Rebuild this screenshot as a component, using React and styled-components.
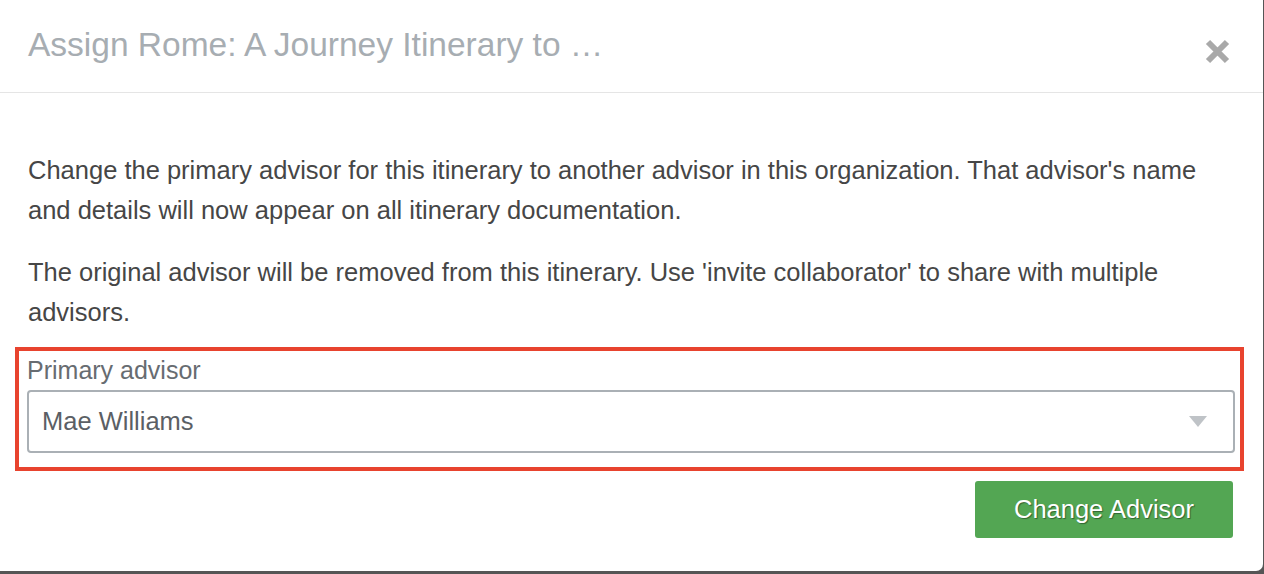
import React from "react";
import styled, { createGlobalStyle } from "styled-components";

const Global = createGlobalStyle`
  html, body { margin: 0; padding: 0; }
  body {
    background: #555555;
    font-family: "Liberation Sans", Arial, Helvetica, sans-serif;
    overflow: hidden;
  }
`;

const Page = styled.div`
  width: 1264px;
  height: 574px;
  display: flex;
  align-items: flex-start;
`;

const Modal = styled.div`
  width: 1263px;
  height: 571px;
  background: #fff;
  border-radius: 0 0 7px 0;
  display: flex;
  flex-direction: column;
`;

const Header = styled.div`
  height: 93px;
  box-sizing: border-box;
  border-bottom: 1px solid #e5e5e5;
  display: flex;
  align-items: center;
  justify-content: space-between;
  padding: 0 32px 0 28px;
`;

const Title = styled.h4`
  margin: 0 0 2px 0;
  font-size: 33.5px;
  font-weight: 400;
  color: #a7adb2;
`;

const Close = styled.button`
  border: 0;
  background: none;
  padding: 0;
  width: 28px;
  height: 28px;
  display: flex;
  align-items: center;
  justify-content: center;
  cursor: pointer;
  margin-top: 10px;
`;

const Body = styled.div`
  padding: 57px 30px 0 28px;
  display: flex;
  flex-direction: column;
`;

const Para = styled.p`
  margin: 0 0 22px 0;
  font-size: 25.5px;
  line-height: 40px;
  color: #464646;
  &:last-of-type { margin-bottom: 15px; }
`;

const Highlight = styled.div`
  margin: 0 -11px 0 -13px;
  border: 4px solid #e8432e;
  padding: 1px 5px 14px 8px;
  display: flex;
  flex-direction: column;
  gap: 2px;
`;

const Label = styled.label`
  font-size: 25px;
  color: #676c71;
  line-height: 36px;
`;

const SelectBox = styled.div`
  height: 63px;
  box-sizing: border-box;
  border: 2px solid #aab0b5;
  border-radius: 4px;
  display: flex;
  align-items: center;
  justify-content: space-between;
  padding: 0 26px 0 13px;
  font-size: 25.5px;
  color: #5b5f65;
`;

const Caret = styled.span`
  width: 0;
  height: 0;
  border-left: 9px solid transparent;
  border-right: 9px solid transparent;
  border-top: 11px solid #bfc3c7;
`;

const Footer = styled.div`
  display: flex;
  justify-content: flex-end;
  padding-top: 10px;
`;

const Button = styled.button`
  width: 258px;
  height: 57px;
  border: 0;
  border-radius: 3px;
  background: #53a653;
  color: #fff;
  font-family: inherit;
  font-size: 25.5px;
  text-shadow: 1px 1px 1px rgba(0, 0, 0, 0.4);
  cursor: pointer;
`;

export default function App() {
  return (
    <Page>
      <Global />
      <Modal>
        <Header>
          <Title>Assign Rome: A Journey Itinerary to …</Title>
          <Close aria-label="Close">
            <svg width="27" height="27" viewBox="0 0 27 27">
              <path d="M4 4 L23 23 M23 4 L4 23" stroke="#a9a9a9" strokeWidth="6" strokeLinecap="butt" />
            </svg>
          </Close>
        </Header>
        <Body>
          <Para>
            Change the primary advisor for this itinerary to another advisor in this organization. That advisor's name and details will now appear on all itinerary documentation.
          </Para>
          <Para>
            The original advisor will be removed from this itinerary. Use 'invite collaborator' to share with multiple advisors.
          </Para>
          <Highlight>
            <Label>Primary advisor</Label>
            <SelectBox>
              <span>Mae Williams</span>
              <Caret />
            </SelectBox>
          </Highlight>
          <Footer>
            <Button>Change Advisor</Button>
          </Footer>
        </Body>
      </Modal>
    </Page>
  );
}
